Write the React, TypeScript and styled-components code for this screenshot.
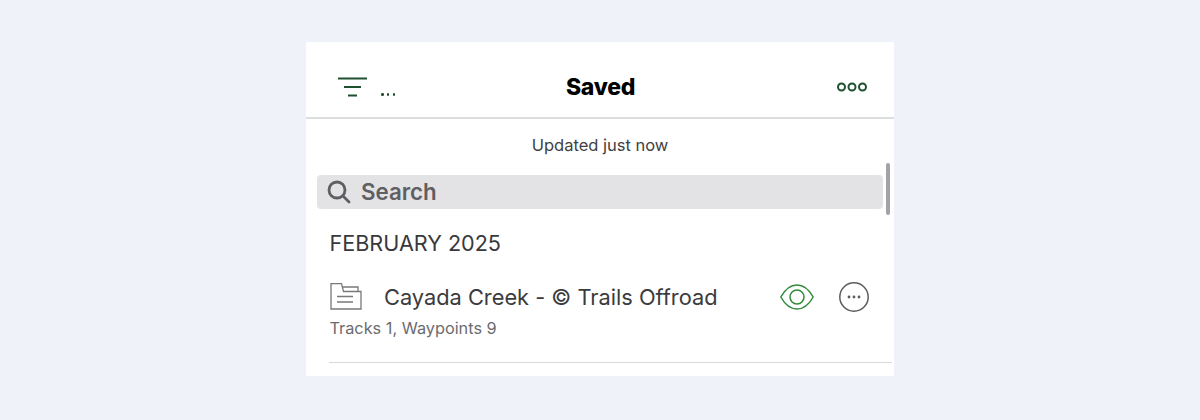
import React from 'react';
import styled, { createGlobalStyle } from 'styled-components';

const GlobalStyle = createGlobalStyle`
    html, body {
        margin: 0;
        padding: 0;
        background: #f0f2fa;
        font-family: Inter, "Liberation Sans", sans-serif;
    }
`;

const Page = styled.div`
    display: flex;
    justify-content: center;
    padding-top: 42px;
    height: 378px;
`;

const Panel = styled.div`
    position: relative;
    width: 588px;
    height: 334px;
    background: #ffffff;
    overflow: hidden;
`;

const Header = styled.header`
    display: flex;
    align-items: center;
    justify-content: space-between;
    height: 61px;
    padding: 14px 27px 0 32px;
    border-bottom: 2px solid #dcdddf;
`;

const HeaderLeft = styled.div`
    display: flex;
    align-items: flex-end;
    gap: 13px;
    width: 96px;
`;

const Ellipsis = styled.span`
    display: flex;
    gap: 3.300px;
    margin-bottom: 1px;
`;

const Dot = styled.i`
    width: 2.500px;
    height: 2.500px;
    background: #1f5130;
    border-radius: 50%;
`;

const Title = styled.h1`
    margin: 0;
    font-size: 23px;
    line-height: 26px;
    font-weight: 800;
    color: #000000;
    letter-spacing: -0.3px;
`;

const HeaderRight = styled.div`
    display: flex;
    justify-content: flex-end;
    width: 100px;
`;

const Updated = styled.div`
    padding-top: 16px;
    height: 40px;
    box-sizing: border-box;
    text-align: center;
    font-size: 16.500px;
    line-height: 20px;
    color: #3f3f42;
`;

const SearchBar = styled.div`
    display: flex;
    align-items: center;
    gap: 10px;
    height: 34px;
    margin: 16px 11px 0;
    padding-left: 10px;
    background: #e3e3e5;
    border-radius: 4px;
`;

const SearchText = styled.span`
    font-size: 22.300px;
    line-height: 28px;
    font-weight: 600;
    color: #5f5f63;
`;

const Section = styled.div`
    padding: 21px 0 0 23.500px;
    font-size: 21.600px;
    line-height: 26px;
    color: #39393c;
`;

const Row = styled.div`
    display: flex;
    align-items: center;
    margin: 25px 25px 0 24px;
    height: 32px;
`;

const RowName = styled.span`
    flex: 1;
    margin-left: 22px;
    font-size: 21.800px;
    line-height: 28px;
    color: #3b3b3e;
`;

const RowActions = styled.div`
    display: flex;
    align-items: center;
    gap: 25px;
`;

const Meta = styled.div`
    margin: 5px 0 0 23.500px;
    font-size: 16.300px;
    line-height: 20px;
    color: #6b6b6f;
`;

const Divider = styled.div`
    height: 1px;
    margin: 24px 2px 0 23px;
    background: #d9d9db;
`;

const Scrollbar = styled.div`
    position: absolute;
    top: 121px;
    right: 4px;
    width: 4px;
    height: 52px;
    border-radius: 2px;
    background: #a3a3a5;
`;

const FilterIcon = () => (
    <svg width="30" height="20" viewBox="0 0 30 20" fill="none" stroke="#1f5130" strokeWidth="2">
        <path d="M0 1.500h29M6 10h17M10 18.500h9" />
    </svg>
);

const RingsIcon = () => (
    <svg width="30" height="12" viewBox="0 0 30 12" fill="none" stroke="#1f5130" strokeWidth="2">
        <circle cx="4.500" cy="6" r="3.500" />
        <circle cx="15" cy="6" r="3.500" />
        <circle cx="25.500" cy="6" r="3.500" />
    </svg>
);

const SearchIcon = () => (
    <svg width="24" height="24" viewBox="0 0 24 24" fill="none" stroke="#5f5f63" strokeWidth="2.800" strokeLinecap="round">
        <circle cx="10" cy="10" r="8" />
        <path d="M16 16l6 6" />
    </svg>
);

const FolderIcon = () => (
    <svg width="32" height="28" viewBox="0 0 32 28" fill="none" stroke="#78787a" strokeWidth="1.300">
        <path d="M1 26V0.700h10.500l2 7.800H31V26z" />
        <path d="M12 4h16V8.500" />
        <path d="M7 13.500h16M7 19h16" />
    </svg>
);

const EyeIcon = () => (
    <svg width="34" height="26" viewBox="0 0 34 26" fill="none" stroke="#2f8a3a" strokeWidth="1.500">
        <path d="M0.800 13C5 5.500 11 1 17 1s12 4.500 16.200 12C29 20.500 23 25 17 25S5 20.500 0.800 13z" />
        <circle cx="17" cy="13" r="7" />
    </svg>
);

const MoreIcon = () => (
    <svg width="30" height="30" viewBox="0 0 30 30" fill="none">
        <circle cx="15" cy="15" r="14.200" stroke="#5c5c5e" strokeWidth="1.500" />
        <circle cx="10" cy="15" r="1.400" fill="#5c5c5e" />
        <circle cx="15" cy="15" r="1.400" fill="#5c5c5e" />
        <circle cx="20" cy="15" r="1.400" fill="#5c5c5e" />
    </svg>
);

export default function App() {
    return (
        <Page>
            <GlobalStyle />
            <Panel>
                <Header>
                    <HeaderLeft>
                        <FilterIcon />
                        <Ellipsis><Dot /><Dot /><Dot /></Ellipsis>
                    </HeaderLeft>
                    <Title>Saved</Title>
                    <HeaderRight><RingsIcon /></HeaderRight>
                </Header>
                <Updated>Updated just now</Updated>
                <SearchBar>
                    <SearchIcon />
                    <SearchText>Search</SearchText>
                </SearchBar>
                <Section>FEBRUARY 2025</Section>
                <Row>
                    <FolderIcon />
                    <RowName>Cayada Creek - © Trails Offroad</RowName>
                    <RowActions>
                        <EyeIcon />
                        <MoreIcon />
                    </RowActions>
                </Row>
                <Meta>Tracks 1, Waypoints 9</Meta>
                <Divider />
                <Scrollbar />
            </Panel>
        </Page>
    );
}
